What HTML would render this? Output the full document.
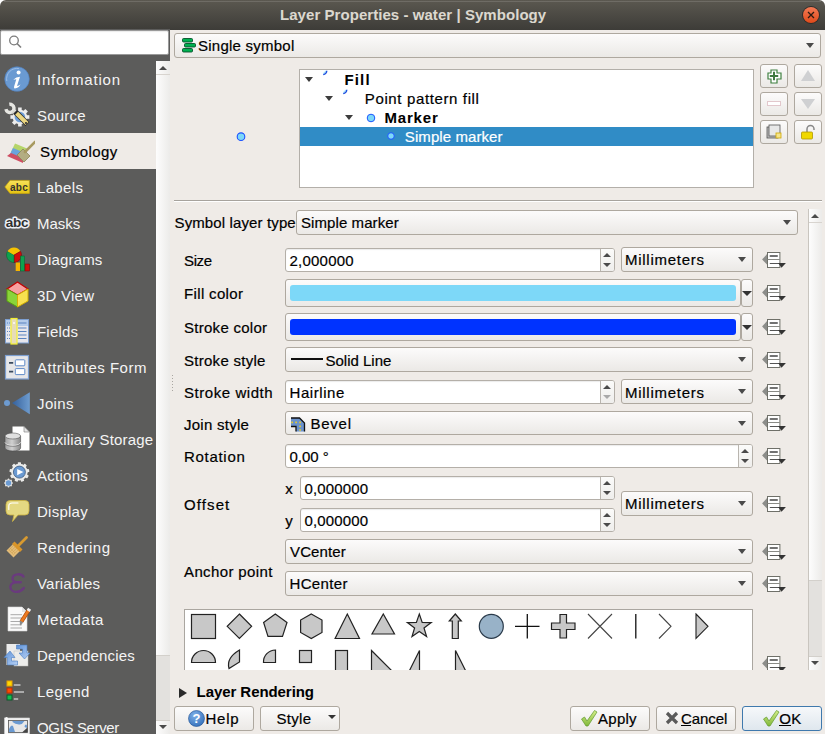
<!DOCTYPE html>
<html><head><meta charset="utf-8">
<style>
*{box-sizing:border-box}
html,body{margin:0;padding:0}
body{width:825px;height:734px;overflow:hidden;position:relative;background:#efebe7;font-family:"Liberation Sans",sans-serif;font-size:15px;color:#000}
.a{position:absolute}
.t{position:absolute;white-space:nowrap;line-height:18px;height:18px;-webkit-text-stroke:0.2px currentColor}
#title{left:0;top:0;width:825px;height:30px;border-radius:6px 6px 0 0;background:linear-gradient(#5b5850,#3d3c38);}
#corner{left:0;top:0;width:825px;height:8px;background:#fff}
.btn{position:absolute;border:1px solid #aea89f;border-radius:3px;background:linear-gradient(#fcfbfb,#ebe9e6)}
.inp{position:absolute;border:1px solid #b4afa8;border-radius:3px;background:#fff;box-shadow:inset 0 1px 1px rgba(0,0,0,.08)}
.arr{position:absolute;width:0;height:0;border-left:5px solid transparent;border-right:5px solid transparent;border-top:5px solid #4a4a4a}
.up{position:absolute;width:0;height:0;border-left:5px solid transparent;border-right:5px solid transparent;border-bottom:5px solid #4a4a4a}
.sb{position:absolute;border-left:1px solid #c9c5bf}
.side{color:#f4f4f4;-webkit-text-stroke:0}
</style></head><body>
<div id="corner" class="a"></div>
<div id="title" class="a"></div>
<div class="a" style="left:4px;top:1px;width:817px;height:1px;background:rgba(255,255,255,0.13)"></div>
<div class="t" style="left:280px;top:5.5px;font-weight:bold;color:#dcd8cf;letter-spacing:0.054px;-webkit-text-stroke:0.05px currentColor">Layer Properties - water | Symbology</div>
<!-- close -->
<svg class="a" style="left:801px;top:5px" width="20" height="20" viewBox="0 0 20 20">
<defs><linearGradient id="cg" x1="0" y1="0" x2="0" y2="1"><stop offset="0" stop-color="#f37a55"/><stop offset="1" stop-color="#df4a1a"/></linearGradient></defs>
<circle cx="10" cy="10" r="9" fill="#2e2d2a"/><circle cx="10" cy="10" r="8" fill="url(#cg)"/>
<path d="M7 7 L13 13 M13 7 L7 13" stroke="#2a1a12" stroke-width="1.3"/>
</svg>

<!-- sidebar -->
<div class="a" style="left:0;top:29px;width:170px;height:705px;background:#5c5c5b"></div>
<div class="inp" style="left:0;top:30px;width:169px;height:25px;border-radius:2px;border-color:#9a9a9a"></div>
<svg class="a" style="left:8px;top:34px" width="16" height="16" viewBox="0 0 16 16"><circle cx="6" cy="6.5" r="4.3" fill="none" stroke="#7b7b7b" stroke-width="1.3"/><path d="M9 9.5 L13 13.5" stroke="#7b7b7b" stroke-width="1.6"/></svg>

<div class="t side" style="left:37px;top:71px;letter-spacing:0.8px">Information</div>
<svg class="a" style="left:1px;top:63px" width="32" height="32" viewBox="0 0 32 32"><circle cx="16" cy="16" r="12.3" fill="#6a9ad2" stroke="#4f7fbf" stroke-width="0.6"/>
<path d="M5.8 18 A10.5 10.5 0 0 1 18 5.6" fill="none" stroke="#a6c4ea" stroke-width="1" opacity="0.8"/>
<circle cx="17.6" cy="9.6" r="2" fill="#fff"/>
<path d="M12.3 16.8 Q15 14 19 13.8 L16 23 Q18 22.8 19.5 21.5 Q18 25 13.8 25.4 Q12.6 25.3 13.1 23.4 L15.3 16.2 Q14 16.2 12.3 16.8 Z" fill="#fff"/></svg>
<div class="t side" style="left:37px;top:107px;letter-spacing:0.2px">Source</div>
<svg class="a" style="left:1px;top:99px" width="32" height="32" viewBox="0 0 32 32"><g fill="#ececec"><rect x="17.10" y="8.50" width="3.6" height="4" transform="rotate(0 18.9 18)"/><rect x="17.10" y="8.50" width="3.6" height="4" transform="rotate(45 18.9 18)"/><rect x="17.10" y="8.50" width="3.6" height="4" transform="rotate(90 18.9 18)"/><rect x="17.10" y="8.50" width="3.6" height="4" transform="rotate(135 18.9 18)"/><rect x="17.10" y="8.50" width="3.6" height="4" transform="rotate(180 18.9 18)"/><rect x="17.10" y="8.50" width="3.6" height="4" transform="rotate(225 18.9 18)"/><rect x="17.10" y="8.50" width="3.6" height="4" transform="rotate(270 18.9 18)"/><rect x="17.10" y="8.50" width="3.6" height="4" transform="rotate(315 18.9 18)"/><circle cx="18.9" cy="18" r="7.3"/></g><circle cx="18.9" cy="18" r="5.3" fill="#6f9fd8"/>
<path d="M8.3 5.3 A4.1 4.1 0 1 1 4.9 10.2" fill="none" stroke="#e6e6e2" stroke-width="3.4"/>
<path d="M11.8 12.3 L15 15.2" stroke="#d6d6d2" stroke-width="3.6"/>
<path d="M14.2 12.8 L26.4 25" stroke="#2a2a2a" stroke-width="5.6"/>
<path d="M15.6 14.2 L26 24.6" stroke="#ebd680" stroke-width="4.2"/>
<circle cx="25" cy="24" r="1.1" fill="#333"/></svg>
<div class="a" style="left:0;top:133px;width:156px;height:36px;background:#efebe7"></div>
<div class="t" style="left:40px;top:143px;color:#000;letter-spacing:0.38px">Symbology</div>
<svg class="a" style="left:3px;top:135px" width="32" height="32" viewBox="0 0 32 32"><path d="M12 8.5 L24 13.5 L20 22 L8 17 Z" fill="#b6d56a"/>
<path d="M10 13 L22 18 L18 26 L6 21 Z" fill="#6aa4dc"/>
<path d="M8 18 L20 23 L20 28 L4 21 Z" fill="#cf4f63"/>
<path d="M14 20 L20 14 L27 21 L21 27 Z" fill="#b3ad82" stroke="#8b845b" stroke-width="0.8"/>
<path d="M22 17 L32 7" stroke="#a89a60" stroke-width="2.6" stroke-linecap="round"/></svg>
<div class="t side" style="left:37px;top:179px;letter-spacing:0.34px">Labels</div>
<svg class="a" style="left:1px;top:171px" width="32" height="32" viewBox="0 0 32 32"><defs><linearGradient id="lg" x1="0" y1="0" x2="0" y2="1"><stop offset="0" stop-color="#f8e25a"/><stop offset="1" stop-color="#e6c412"/></linearGradient></defs><path d="M3.9 15.9 L9 9.4 L28.4 9.4 L28.4 22.4 L9 22.4 Z" fill="url(#lg)" stroke="#caa70a" stroke-width="0.7"/>
<text x="18" y="19.6" font-family="Liberation Sans" font-weight="bold" font-size="10" text-anchor="middle" fill="#333" letter-spacing="0.2">abc</text></svg>
<div class="t side" style="left:37px;top:215px;letter-spacing:0.0px">Masks</div>
<svg class="a" style="left:1px;top:207px" width="32" height="32" viewBox="0 0 32 32"><text x="16" y="20" font-family="Liberation Sans" font-weight="bold" font-size="13.5" text-anchor="middle" fill="#303030" stroke="#eef0f6" stroke-width="3" stroke-linejoin="round" paint-order="stroke" letter-spacing="-0.3">abc</text></svg>
<div class="t side" style="left:37px;top:251px;letter-spacing:0.17px">Diagrams</div>
<svg class="a" style="left:1px;top:243px" width="32" height="32" viewBox="0 0 32 32"><path d="M13 12 L13 4.5 A7.5 7.5 0 0 1 19.5 8.3 Z" fill="#f6c200"/>
<path d="M13 12 L19.5 8.3 A7.5 7.5 0 0 1 13 19.5 Z" fill="#d10d0d" stroke="#7a0000" stroke-width="0.5"/>
<path d="M13 12 L13 19.5 A7.5 7.5 0 0 1 6.5 8.3 Z" fill="#0fa050" stroke="#05602e" stroke-width="0.5"/>
<path d="M13 12 L6.5 8.3 A7.5 7.5 0 0 1 13 4.5 Z" fill="#f6c200"/>
<rect x="14.7" y="19.5" width="4.3" height="8.5" fill="#f6b400"/>
<rect x="19.6" y="13" width="3.9" height="15" fill="#0fa050" stroke="#05602e" stroke-width="0.5"/>
<rect x="24" y="21" width="4.5" height="7" fill="#d10d0d" stroke="#7a0000" stroke-width="0.5"/></svg>
<div class="t side" style="left:37px;top:287px;letter-spacing:0.23px">3D View</div>
<svg class="a" style="left:1px;top:279px" width="32" height="32" viewBox="0 0 32 32"><path d="M16.5 3 L27 10 L16.5 16 L6 10 Z" fill="#f7a0a0" stroke="#c00000" stroke-width="1.2"/>
<path d="M6 10 L16.5 16 L16.5 28 L6 22 Z" fill="#8ad43a" stroke="#58a010" stroke-width="1"/>
<path d="M27 10 L16.5 16 L16.5 28 L27 22 Z" fill="#f8e050" stroke="#d4b000" stroke-width="1"/></svg>
<div class="t side" style="left:37px;top:323px;letter-spacing:0.2px">Fields</div>
<svg class="a" style="left:1px;top:315px" width="32" height="32" viewBox="0 0 32 32"><rect x="4.5" y="4.5" width="23" height="23.5" fill="#e6e6ec" stroke="#7d9fd0" stroke-width="1"/>
<rect x="5" y="5" width="22" height="6" fill="#b4cbea"/>
<path d="M17 8 H25.5 M17 13 H25.5 M17 16.5 H25.5 M17 20 H25.5 M17 23.5 H25.5" stroke="#5a84c0" stroke-width="1.1"/>
<path d="M6 8 H9 M6 13 H9 M6 16.5 H9 M6 20 H9 M6 23.5 H9" stroke="#5a84c0" stroke-width="1.1" stroke-dasharray="1 1"/>
<rect x="10" y="3.5" width="6" height="25.5" fill="#e6dcb8" stroke="#f4f030" stroke-width="1.2"/>
<circle cx="13" cy="8" r="0.9" fill="#fff"/></svg>
<div class="t side" style="left:37px;top:359px;letter-spacing:0.49px">Attributes Form</div>
<svg class="a" style="left:1px;top:351px" width="32" height="32" viewBox="0 0 32 32"><rect x="4.5" y="4.5" width="23" height="23.5" fill="#e6e6e8" stroke="#7d9fd0" stroke-width="1.2"/>
<rect x="14.3" y="8.8" width="9.5" height="6" rx="0.8" fill="#fff" stroke="#5f8ac8" stroke-width="1"/>
<rect x="14.3" y="17.6" width="9.5" height="6" rx="0.8" fill="#fff" stroke="#5f8ac8" stroke-width="1"/>
<path d="M8 11.8 H12.2 M8 20.6 H12.2" stroke="#3a4a5e" stroke-width="1.8"/></svg>
<div class="t side" style="left:37px;top:395px;letter-spacing:0.38px">Joins</div>
<svg class="a" style="left:1px;top:387px" width="32" height="32" viewBox="0 0 32 32"><defs><linearGradient id="jg" x1="0" x2="1"><stop offset="0" stop-color="#34609c"/><stop offset="1" stop-color="#6e9ccf"/></linearGradient></defs>
<circle cx="6" cy="16" r="3" fill="#6d9bd0"/>
<path d="M11 16 L28.8 5.2 L28.8 27.2 Z" fill="url(#jg)"/></svg>
<div class="t side" style="left:37px;top:431px;letter-spacing:0.17px">Auxiliary Storage</div>
<svg class="a" style="left:1px;top:423px" width="32" height="32" viewBox="0 0 32 32"><defs><linearGradient id="dbg" x1="0" x2="1"><stop offset="0" stop-color="#a0a0a0"/><stop offset="0.45" stop-color="#d0d0d0"/><stop offset="1" stop-color="#888"/></linearGradient></defs>
<path d="M11.5 3.5 H23 L28.5 9 V27.5 H11.5 Z" fill="#fff"/>
<path d="M23 3.5 V9 H28.5 Z" fill="#e6e6e6" stroke="#777" stroke-width="0.6"/>
<path d="M4 13 V25 A7.8 3 0 0 0 19.6 25 V13 Z" fill="url(#dbg)" stroke="#4a4a4a" stroke-width="0.6"/>
<ellipse cx="11.8" cy="13" rx="7.8" ry="3" fill="#e0e0e0" stroke="#555" stroke-width="0.6"/>
<path d="M4 19.4 A7.8 3 0 0 0 19.6 19.4" fill="none" stroke="#eaeaea" stroke-width="0.9"/>
<path d="M4 20.3 A7.8 3 0 0 0 19.6 20.3" fill="none" stroke="#5a5a5a" stroke-width="0.6"/></svg>
<div class="t side" style="left:37px;top:467px;letter-spacing:0.28px">Actions</div>
<svg class="a" style="left:1px;top:459px" width="32" height="32" viewBox="0 0 32 32"><g fill="#ececea"><rect x="16.80" y="3.20" width="3.2" height="3.10" rx="0.6" transform="rotate(0.0 18.4 13.1)"/><rect x="16.80" y="3.20" width="3.2" height="3.10" rx="0.6" transform="rotate(40.0 18.4 13.1)"/><rect x="16.80" y="3.20" width="3.2" height="3.10" rx="0.6" transform="rotate(80.0 18.4 13.1)"/><rect x="16.80" y="3.20" width="3.2" height="3.10" rx="0.6" transform="rotate(120.0 18.4 13.1)"/><rect x="16.80" y="3.20" width="3.2" height="3.10" rx="0.6" transform="rotate(160.0 18.4 13.1)"/><rect x="16.80" y="3.20" width="3.2" height="3.10" rx="0.6" transform="rotate(200.0 18.4 13.1)"/><rect x="16.80" y="3.20" width="3.2" height="3.10" rx="0.6" transform="rotate(240.0 18.4 13.1)"/><rect x="16.80" y="3.20" width="3.2" height="3.10" rx="0.6" transform="rotate(280.0 18.4 13.1)"/><rect x="16.80" y="3.20" width="3.2" height="3.10" rx="0.6" transform="rotate(320.0 18.4 13.1)"/><circle cx="18.4" cy="13.1" r="8.3"/></g><circle cx="18.4" cy="13.1" r="6" fill="#6a9ad2" stroke="#2d4a70" stroke-width="0.7"/><path d="M16.2 10 L22.3 13.1 L16.2 16.2 Z" fill="#fff"/><g fill="#e4e4e2"><rect x="6.70" y="19.60" width="1.6" height="2.30" rx="0.6" transform="rotate(0.0 7.5 24)"/><rect x="6.70" y="19.60" width="1.6" height="2.30" rx="0.6" transform="rotate(45.0 7.5 24)"/><rect x="6.70" y="19.60" width="1.6" height="2.30" rx="0.6" transform="rotate(90.0 7.5 24)"/><rect x="6.70" y="19.60" width="1.6" height="2.30" rx="0.6" transform="rotate(135.0 7.5 24)"/><rect x="6.70" y="19.60" width="1.6" height="2.30" rx="0.6" transform="rotate(180.0 7.5 24)"/><rect x="6.70" y="19.60" width="1.6" height="2.30" rx="0.6" transform="rotate(225.0 7.5 24)"/><rect x="6.70" y="19.60" width="1.6" height="2.30" rx="0.6" transform="rotate(270.0 7.5 24)"/><rect x="6.70" y="19.60" width="1.6" height="2.30" rx="0.6" transform="rotate(315.0 7.5 24)"/><circle cx="7.5" cy="24" r="3.6"/></g><circle cx="7.5" cy="24" r="2.7" fill="#6a9ad2"/></svg>
<div class="t side" style="left:37px;top:503px;letter-spacing:0.25px">Display</div>
<svg class="a" style="left:1px;top:495px" width="32" height="32" viewBox="0 0 32 32"><path d="M9 5.5 H24 Q28 5.5 28 9.5 V16 Q28 20 24 20 H17 L11.5 26.5 L13 20 H9 Q5 20 5 16 V9.5 Q5 5.5 9 5.5 Z" fill="#e4d882" stroke="#cdb440" stroke-width="0.8"/>
<path d="M7.8 14.5 V11 Q7.8 8 11.2 8 H17" stroke="#fff" stroke-width="1.1" fill="none" stroke-linecap="round"/></svg>
<div class="t side" style="left:37px;top:539px;letter-spacing:0.47px">Rendering</div>
<svg class="a" style="left:1px;top:531px" width="32" height="32" viewBox="0 0 32 32"><path d="M16.5 15.5 L25.5 6.5" stroke="#d89a30" stroke-width="2.8" stroke-linecap="round"/>
<path d="M5.5 19.5 L12.5 12.5 L19.5 19.5 L12.5 26.5 Z" fill="#e2bb78"/>
<path d="M8 19 L13 14 M9.5 20.5 L14.5 15.5 M11 22 L16 17 M12.5 23.5 L17.5 18.5 M9 17 L14 22 M7.5 18.5 L12.5 23.5" stroke="#c8963c" stroke-width="0.5" opacity="0.7"/>
<path d="M11 13 L13.5 10.5 L21.5 18.5 L19 21 Z" fill="#d9952a"/></svg>
<div class="t side" style="left:37px;top:575px;letter-spacing:0.2px">Variables</div>
<svg class="a" style="left:1px;top:567px" width="32" height="32" viewBox="0 0 32 32"><path d="M22.5 9.5 C20.5 6.5 12.5 6.3 11.6 10.8 C11.2 13.5 13 15.2 15.8 15.2 L19.8 15.2 M15.8 15.2 C11 15.2 9 17.6 9.4 20.6 C9.9 24 13.5 25 16 24.8 C19 24.6 21.2 23.2 22.8 21" fill="none" stroke="#6a3a7e" stroke-width="2.4" stroke-linecap="round"/></svg>
<div class="t side" style="left:37px;top:611px;letter-spacing:0.56px">Metadata</div>
<svg class="a" style="left:1px;top:603px" width="32" height="32" viewBox="0 0 32 32"><path d="M7 4 H21 L26 9 V28 H7 Z" fill="#fafafa" stroke="#d6d6d6" stroke-width="0.6"/>
<path d="M21 4 V9 H26" fill="#e4e4e4"/>
<path d="M9.5 11.7 H21 M9.5 15 H21 M9.5 18.5 H21 M9.5 21.8 H21 M9.5 25 H21" stroke="#a0a0a0" stroke-width="0.9"/>
<path d="M27.5 7.5 L20.5 18.5" stroke="#b04a08" stroke-width="4"/>
<path d="M27.5 7.5 L20.5 18.5" stroke="#ec7a20" stroke-width="2.6"/>
<path d="M28.6 5.8 L27.2 8" stroke="#f0f0f0" stroke-width="3.6"/>
<path d="M18.7 17.6 L22.3 19.6 L19 22.8 Z" fill="#8a8a8a"/></svg>
<div class="t side" style="left:37px;top:647px;letter-spacing:0.16px">Dependencies</div>
<svg class="a" style="left:1px;top:639px" width="32" height="32" viewBox="0 0 32 32"><defs><linearGradient id="dpg" x1="0" y1="0" x2="1" y2="1"><stop offset="0" stop-color="#5e92d8"/><stop offset="1" stop-color="#b6d0f4"/></linearGradient></defs>
<rect x="5.5" y="5" width="13.5" height="21" fill="#ececec"/>
<rect x="13" y="12" width="14" height="15" fill="#ececea" stroke="#bdbdb8" stroke-width="0.5"/>
<path d="M9 12 L3 18.5 L6.5 18.5 L6.5 26 L16.5 26 L16.5 22 L10.5 22 L10.5 18.5 L14 18.5 Z" fill="url(#dpg)" stroke="#4a7cc0" stroke-width="0.6"/>
<path d="M15.5 6 L26 6 L26 14 L29 14 L23.5 20 L18 14 L21.5 14 L21.5 10 L15.5 10 Z" fill="url(#dpg)" stroke="#4a7cc0" stroke-width="0.6"/></svg>
<div class="t side" style="left:37px;top:683px;letter-spacing:0.46px">Legend</div>
<svg class="a" style="left:1px;top:675px" width="32" height="32" viewBox="0 0 32 32"><rect x="6" y="6" width="5" height="5" fill="#ffd800" stroke="#e8a000" stroke-width="1"/>
<rect x="6" y="13" width="5" height="5" fill="#ff4a00" stroke="#c03000" stroke-width="1"/>
<rect x="6" y="20" width="5" height="5" fill="#10c050" stroke="#0a5a2a" stroke-width="1"/>
<path d="M12.8 10 H19.5 M12.8 17 H23 M12.8 24 H17.2" stroke="#aaa" stroke-width="2"/></svg>
<div class="t side" style="left:37px;top:719px;letter-spacing:-0.35px">QGIS Server</div>
<svg class="a" style="left:1px;top:711px" width="32" height="32" viewBox="0 0 32 32"><rect x="3.5" y="7" width="25" height="18" fill="#efefef" stroke="#d8d8d8" stroke-width="0.6"/>
<rect x="4" y="6" width="3" height="19" rx="1.5" fill="#fafafa"/>
<rect x="7.5" y="9.5" width="19" height="12" fill="#e8e8e8" stroke="#555" stroke-width="0.8"/>
<path d="M11.5 10 H23.5 Q21 14 18 13.5 Q14 13 11.5 11 Z" fill="#6a9ad2"/>
<path d="M8 21 V18 Q10 13 12 15 Q13 18 14 21 Z" fill="#6a9ad2"/>
<path d="M24 14 Q26 12.5 26 15.5 V17 L23.5 16 Z" fill="#6a9ad2"/>
<path d="M21 21.5 L26.5 16.5 L26.5 21.5 Z" fill="#444"/></svg>


<!-- sidebar scrollbar -->
<div class="a" style="left:156px;top:61px;width:14px;height:673px;background:#e3e1de"></div>
<div class="a" style="left:156px;top:61px;width:14px;height:594px;background:linear-gradient(90deg,#fdfdfd,#ecebe9)"></div>
<div class="a" style="left:156px;top:74px;width:14px;height:1px;background:#d8d4cf"></div>
<div class="up" style="left:159px;top:65.8px;border-width:0 4px 4.2px 4px"></div>
<div class="a" style="left:156px;top:655px;width:14px;height:1px;background:#d3d0cb"></div>
<div class="a" style="left:156px;top:720px;width:14px;height:14px;background:linear-gradient(90deg,#fdfdfd,#ecebe9);border-top:1px solid #d3d0cb"></div>
<div class="arr" style="left:159px;top:725px;border-width:4.2px 4px 0 4px"></div>

<div class="btn" style="left:174px;top:33px;width:647px;height:25px"></div>
<div class="arr" style="left:805.5px;top:43.0px;border-width:5px 4.5px 0 4.5px"></div>
<svg class="a" style="left:182px;top:38px" width="14" height="15" viewBox="0 0 14 15"><rect x="0.5" y="0.5" width="10" height="3.5" rx="1" fill="#00b050" stroke="#06502a" stroke-width="0.9"/><rect x="2.5" y="5.5" width="11" height="3.5" rx="1" fill="#00b050" stroke="#06502a" stroke-width="0.9"/><rect x="0.5" y="10.5" width="10" height="3.5" rx="1" fill="#00b050" stroke="#06502a" stroke-width="0.9"/></svg>
<div class="t" style="left:198px;top:37px;letter-spacing:0.243px">Single symbol</div>
<svg class="a" style="left:235px;top:131px" width="12" height="12"><circle cx="6" cy="5.7" r="3.8" fill="#7dd8f8" stroke="#1a50ff" stroke-width="1.1"/></svg>
<div class="a" style="left:299px;top:69px;width:455px;height:119px;background:#fff;border:1px solid #b3afa9"></div>
<div class="a" style="left:300px;top:127px;width:453px;height:19px;background:#308cc6"></div>
<div class="arr" style="left:305px;top:77px;border-width:5px 4.5px 0 4.5px;border-top-color:#3c3c3c"></div>
<div class="arr" style="left:325px;top:96px;border-width:5px 4.5px 0 4.5px;border-top-color:#3c3c3c"></div>
<div class="arr" style="left:345px;top:115px;border-width:5px 4.5px 0 4.5px;border-top-color:#3c3c3c"></div>
<svg class="a" style="left:322px;top:70px" width="7" height="7"><path d="M4.8 0.8 A4.2 4.2 0 0 1 1.2 4.6" fill="none" stroke="#2050e0" stroke-width="1.4"/><path d="M3.6 0.8 A3 3 0 0 1 1.2 3.4" fill="none" stroke="#7dd8f8" stroke-width="0.8"/></svg>
<svg class="a" style="left:342px;top:89px" width="7" height="7"><path d="M4.8 0.8 A4.2 4.2 0 0 1 1.2 4.6" fill="none" stroke="#2050e0" stroke-width="1.4"/><path d="M3.6 0.8 A3 3 0 0 1 1.2 3.4" fill="none" stroke="#7dd8f8" stroke-width="0.8"/></svg>
<svg class="a" style="left:365px;top:112px" width="12" height="12"><circle cx="6" cy="6" r="3.8" fill="#7dd8f8" stroke="#1a55ff" stroke-width="1"/></svg>
<svg class="a" style="left:385px;top:130px" width="12" height="12"><circle cx="6" cy="6" r="3.3" fill="#7dd8f8" stroke="#1a55ff" stroke-width="1"/></svg>
<div class="t" style="left:344.5px;top:71px;font-weight:bold;letter-spacing:1.140px;-webkit-text-stroke:0.05px currentColor">Fill</div>
<div class="t" style="left:364.8px;top:90px;letter-spacing:0.630px">Point pattern fill</div>
<div class="t" style="left:384.5px;top:109px;font-weight:bold;letter-spacing:0.816px;-webkit-text-stroke:0.05px currentColor">Marker</div>
<div class="t" style="left:404.8px;top:128px;color:#fff;letter-spacing:0.085px">Simple marker</div>
<div class="btn" style="left:760px;top:64px;width:28px;height:24px"></div>
<div class="btn" style="left:794px;top:64px;width:28px;height:24px"></div>
<div class="btn" style="left:760px;top:92px;width:28px;height:24px"></div>
<div class="btn" style="left:794px;top:92px;width:28px;height:24px"></div>
<div class="btn" style="left:760px;top:120px;width:28px;height:24px"></div>
<div class="btn" style="left:794px;top:120px;width:28px;height:24px"></div>
<svg class="a" style="left:766px;top:68px" width="16" height="16" viewBox="0 0 16 16"><path d="M4.5 1.5 H10.5 V4.5 H14.5 V10.5 H10.5 V14.5 H4.5 V10.5 H1.5 V4.5 H4.5 Z" transform="translate(0.5,0.5)" fill="#fff" stroke="#3f8040" stroke-width="1.2"/><path d="M8 3.8 V12.2 M3.8 8 H12.2" stroke="#3f7a40" stroke-width="2"/></svg>
<svg class="a" style="left:799px;top:69px" width="18" height="14" viewBox="0 0 18 14"><path d="M9 1 L16 12 L2 12 Z" fill="#cfd0d2"/></svg>
<svg class="a" style="left:766px;top:97px" width="16" height="14" viewBox="0 0 16 14"><rect x="1.5" y="4.5" width="13" height="4" fill="#fff" stroke="#e2c8cc" stroke-width="1"/></svg>
<svg class="a" style="left:799px;top:97px" width="18" height="14" viewBox="0 0 18 14"><path d="M2 2 L16 2 L9 12 Z" fill="#cfd0d2"/></svg>
<svg class="a" style="left:766px;top:124px" width="16" height="16" viewBox="0 0 16 16"><rect x="1" y="3" width="11" height="11" fill="#bdbdbd" stroke="#555" stroke-width="0.8"/><rect x="3" y="1" width="11" height="11" fill="#e8e8e8" stroke="#555" stroke-width="0.8"/><rect x="10" y="9" width="5" height="5" fill="#f5e58a" stroke="#d0a800" stroke-width="0.8"/></svg>
<svg class="a" style="left:800px;top:124px" width="16" height="16" viewBox="0 0 16 16"><path d="M7 8 V5 A3.5 3.5 0 0 1 14 5 V6" fill="none" stroke="#888" stroke-width="1.5"/><rect x="1.5" y="8" width="11" height="7" rx="1" fill="#f0d800" stroke="#b09800" stroke-width="0.8"/></svg>
<div class="a" style="left:174px;top:200px;width:648px;height:1px;background:#a7a39d"></div>
<div class="a" style="left:174px;top:201px;width:648px;height:1px;background:#fff"></div>
<div class="a" style="left:808px;top:209px;width:14px;height:461px;background:#e3e1de;border-left:1px solid #c9c5bf"></div>
<div class="a" style="left:809px;top:209px;width:13px;height:371px;background:linear-gradient(90deg,#fdfdfd,#ecebe9)"></div>
<div class="a" style="left:809px;top:222px;width:13px;height:1px;background:#d8d4cf"></div>
<div class="up" style="left:811px;top:213.9px;border-width:0 4px 4.2px 4px"></div>
<div class="a" style="left:809px;top:580px;width:13px;height:1px;background:#d3d0cb"></div>
<div class="a" style="left:809px;top:656px;width:13px;height:14px;background:linear-gradient(90deg,#fdfdfd,#ecebe9);border-top:1px solid #d3d0cb"></div>
<div class="arr" style="left:811px;top:661px;border-width:4.2px 4px 0 4px"></div>
<div class="t" style="left:174.5px;top:214px;letter-spacing:0.124px">Symbol layer type</div>
<div class="btn" style="left:296px;top:210px;width:502px;height:25px"></div>
<div class="t" style="left:301px;top:214px;;letter-spacing:0.085px">Simple marker</div>
<div class="arr" style="left:782.5px;top:220.0px;border-width:5px 4.5px 0 4.5px"></div>
<div class="t" style="left:184px;top:252px;;letter-spacing:-0.360px">Size</div>
<div class="inp" style="left:285px;top:248px;width:330px;height:24px"></div>
<div class="t" style="left:289.5px;top:252px;letter-spacing:0.223px">2,000000</div>
<div class="a" style="left:600px;top:249px;width:14px;height:22px;border-left:1px solid #b9b5af;background:linear-gradient(#fbfbfa,#efeeec);border-radius:0 2px 2px 0"></div>
<div class="up" style="left:602.5px;top:253.0px;border-width:0 4px 4.5px 4px"></div>
<div class="arr" style="left:602.5px;top:262.5px;border-width:4.5px 4px 0 4px;border-top-color:#4a4a4a"></div>
<div class="btn" style="left:621px;top:247px;width:132px;height:25px"></div>
<div class="t" style="left:625px;top:251px;letter-spacing:0.736px">Millimeters</div>
<div class="arr" style="left:737.5px;top:257.0px;border-width:5px 4.5px 0 4.5px"></div>
<svg class="a" style="left:761px;top:251px" width="26" height="18" viewBox="0 0 26 18"><path d="M1.1 8.4 L6.5 2.6 L6.5 14 Z" fill="#8c8d8a"/><rect x="6.5" y="1.5" width="12.4" height="15" fill="#fff" stroke="#6f7069" stroke-width="1"/><path d="M6.5 8.5 H18.9" stroke="#8a8b86" stroke-width="1"/><path d="M9.3 5 H16.2" stroke="#444" stroke-width="1.6" stroke-linecap="round"/><path d="M8.8 12.5 H18" stroke="#555" stroke-width="1"/><path d="M17.2 12.1 L24.9 12.1 L20.5 16.8 Z" fill="#333"/></svg>
<div class="t" style="left:184px;top:285px;letter-spacing:0.350px">Fill color</div>
<div class="btn" style="left:285px;top:279px;width:456px;height:28px"></div>
<div class="a" style="left:290px;top:285px;width:446px;height:16px;border-radius:3px;background:#7dd8f8"></div>
<div class="btn" style="left:741px;top:279px;width:12px;height:28px"></div>
<div class="arr" style="left:742px;top:291px;border-width:5px 5px 0 5px;border-top-color:#333"></div>
<svg class="a" style="left:761px;top:284px" width="26" height="18" viewBox="0 0 26 18"><path d="M1.1 8.4 L6.5 2.6 L6.5 14 Z" fill="#8c8d8a"/><rect x="6.5" y="1.5" width="12.4" height="15" fill="#fff" stroke="#6f7069" stroke-width="1"/><path d="M6.5 8.5 H18.9" stroke="#8a8b86" stroke-width="1"/><path d="M9.3 5 H16.2" stroke="#444" stroke-width="1.6" stroke-linecap="round"/><path d="M8.8 12.5 H18" stroke="#555" stroke-width="1"/><path d="M17.2 12.1 L24.9 12.1 L20.5 16.8 Z" fill="#333"/></svg>
<div class="t" style="left:184px;top:318.5px;letter-spacing:0.278px">Stroke color</div>
<div class="btn" style="left:285px;top:313px;width:456px;height:28px"></div>
<div class="a" style="left:290px;top:319px;width:446px;height:16px;border-radius:3px;background:#0033ff"></div>
<div class="btn" style="left:741px;top:313px;width:12px;height:28px"></div>
<div class="arr" style="left:742px;top:325px;border-width:5px 5px 0 5px;border-top-color:#333"></div>
<svg class="a" style="left:761px;top:318px" width="26" height="18" viewBox="0 0 26 18"><path d="M1.1 8.4 L6.5 2.6 L6.5 14 Z" fill="#8c8d8a"/><rect x="6.5" y="1.5" width="12.4" height="15" fill="#fff" stroke="#6f7069" stroke-width="1"/><path d="M6.5 8.5 H18.9" stroke="#8a8b86" stroke-width="1"/><path d="M9.3 5 H16.2" stroke="#444" stroke-width="1.6" stroke-linecap="round"/><path d="M8.8 12.5 H18" stroke="#555" stroke-width="1"/><path d="M17.2 12.1 L24.9 12.1 L20.5 16.8 Z" fill="#333"/></svg>
<div class="t" style="left:184px;top:352px;letter-spacing:0.278px">Stroke style</div>
<div class="btn" style="left:285px;top:347px;width:468px;height:25px"></div>
<div class="arr" style="left:737.5px;top:357.0px;border-width:5px 4.5px 0 4.5px"></div>
<div class="a" style="left:291px;top:358px;width:32px;height:2px;background:#111"></div>
<div class="t" style="left:325.5px;top:352px;letter-spacing:0.000px">Solid Line</div>
<svg class="a" style="left:761px;top:351px" width="26" height="18" viewBox="0 0 26 18"><path d="M1.1 8.4 L6.5 2.6 L6.5 14 Z" fill="#8c8d8a"/><rect x="6.5" y="1.5" width="12.4" height="15" fill="#fff" stroke="#6f7069" stroke-width="1"/><path d="M6.5 8.5 H18.9" stroke="#8a8b86" stroke-width="1"/><path d="M9.3 5 H16.2" stroke="#444" stroke-width="1.6" stroke-linecap="round"/><path d="M8.8 12.5 H18" stroke="#555" stroke-width="1"/><path d="M17.2 12.1 L24.9 12.1 L20.5 16.8 Z" fill="#333"/></svg>
<div class="t" style="left:184px;top:384px;letter-spacing:0.558px">Stroke width</div>
<div class="inp" style="left:285px;top:380px;width:330px;height:24px"></div>
<div class="t" style="left:289.5px;top:384px;letter-spacing:0.570px">Hairline</div>
<div class="a" style="left:600px;top:381px;width:14px;height:22px;border-left:1px solid #b9b5af;background:linear-gradient(#fbfbfa,#efeeec);border-radius:0 2px 2px 0"></div>
<div class="up" style="left:602.5px;top:385.0px;border-width:0 4px 4.5px 4px"></div>
<div class="arr" style="left:602.5px;top:394.5px;border-width:4.5px 4px 0 4px;border-top-color:#a9a9a9"></div>
<div class="btn" style="left:621px;top:379px;width:132px;height:25px"></div>
<div class="t" style="left:625px;top:383.5px;letter-spacing:0.736px">Millimeters</div>
<div class="arr" style="left:737.5px;top:389.0px;border-width:5px 4.5px 0 4.5px"></div>
<svg class="a" style="left:761px;top:383px" width="26" height="18" viewBox="0 0 26 18"><path d="M1.1 8.4 L6.5 2.6 L6.5 14 Z" fill="#8c8d8a"/><rect x="6.5" y="1.5" width="12.4" height="15" fill="#fff" stroke="#6f7069" stroke-width="1"/><path d="M6.5 8.5 H18.9" stroke="#8a8b86" stroke-width="1"/><path d="M9.3 5 H16.2" stroke="#444" stroke-width="1.6" stroke-linecap="round"/><path d="M8.8 12.5 H18" stroke="#555" stroke-width="1"/><path d="M17.2 12.1 L24.9 12.1 L20.5 16.8 Z" fill="#333"/></svg>
<div class="t" style="left:184px;top:416px;letter-spacing:0.260px">Join style</div>
<div class="btn" style="left:285px;top:411px;width:468px;height:24px"></div>
<div class="arr" style="left:737.5px;top:420.5px;border-width:5px 4.5px 0 4.5px"></div>
<svg class="a" style="left:290px;top:417px" width="16" height="15" viewBox="0 0 16 15"><path d="M1 1 H9.5 L14.5 6 V14.5 H6 V9.5 H1 Z" fill="#6a92cc"/><path d="M1 1 H9.5 L14.5 6 V14.5 M1 9.5 H6 V14.5" fill="none" stroke="#111" stroke-width="1.3"/><g fill="#f0d020"><rect x="1.3" y="4.6" width="1.6" height="1.6"/><rect x="5.3" y="4.6" width="1.6" height="1.6"/><rect x="9.3" y="4.6" width="1.6" height="1.6"/><rect x="9.3" y="8.6" width="1.6" height="1.6"/><rect x="9.3" y="12.2" width="1.6" height="1.6"/></g></svg>
<div class="t" style="left:310.5px;top:415px;letter-spacing:0.750px">Bevel</div>
<svg class="a" style="left:761px;top:414px" width="26" height="18" viewBox="0 0 26 18"><path d="M1.1 8.4 L6.5 2.6 L6.5 14 Z" fill="#8c8d8a"/><rect x="6.5" y="1.5" width="12.4" height="15" fill="#fff" stroke="#6f7069" stroke-width="1"/><path d="M6.5 8.5 H18.9" stroke="#8a8b86" stroke-width="1"/><path d="M9.3 5 H16.2" stroke="#444" stroke-width="1.6" stroke-linecap="round"/><path d="M8.8 12.5 H18" stroke="#555" stroke-width="1"/><path d="M17.2 12.1 L24.9 12.1 L20.5 16.8 Z" fill="#333"/></svg>
<div class="t" style="left:184px;top:448px;letter-spacing:0.700px">Rotation</div>
<div class="inp" style="left:285px;top:444px;width:468px;height:24px"></div>
<div class="t" style="left:289.5px;top:448px;letter-spacing:-0.030px">0,00 °</div>
<div class="a" style="left:738px;top:445px;width:14px;height:22px;border-left:1px solid #b9b5af;background:linear-gradient(#fbfbfa,#efeeec);border-radius:0 2px 2px 0"></div>
<div class="up" style="left:740.5px;top:449.0px;border-width:0 4px 4.5px 4px"></div>
<div class="arr" style="left:740.5px;top:458.5px;border-width:4.5px 4px 0 4px;border-top-color:#4a4a4a"></div>
<svg class="a" style="left:761px;top:447px" width="26" height="18" viewBox="0 0 26 18"><path d="M1.1 8.4 L6.5 2.6 L6.5 14 Z" fill="#8c8d8a"/><rect x="6.5" y="1.5" width="12.4" height="15" fill="#fff" stroke="#6f7069" stroke-width="1"/><path d="M6.5 8.5 H18.9" stroke="#8a8b86" stroke-width="1"/><path d="M9.3 5 H16.2" stroke="#444" stroke-width="1.6" stroke-linecap="round"/><path d="M8.8 12.5 H18" stroke="#555" stroke-width="1"/><path d="M17.2 12.1 L24.9 12.1 L20.5 16.8 Z" fill="#333"/></svg>
<div class="t" style="left:184px;top:496px;letter-spacing:1.100px">Offset</div>
<div class="t" style="left:285.3px;top:480px;">x</div>
<div class="inp" style="left:300px;top:476px;width:315px;height:24px"></div>
<div class="t" style="left:304.5px;top:480px;letter-spacing:0.151px">0,000000</div>
<div class="a" style="left:600px;top:477px;width:14px;height:22px;border-left:1px solid #b9b5af;background:linear-gradient(#fbfbfa,#efeeec);border-radius:0 2px 2px 0"></div>
<div class="up" style="left:602.5px;top:481.0px;border-width:0 4px 4.5px 4px"></div>
<div class="arr" style="left:602.5px;top:490.5px;border-width:4.5px 4px 0 4px;border-top-color:#4a4a4a"></div>
<div class="t" style="left:285.3px;top:512px;">y</div>
<div class="inp" style="left:300px;top:508px;width:315px;height:24px"></div>
<div class="t" style="left:304.5px;top:512px;letter-spacing:0.151px">0,000000</div>
<div class="a" style="left:600px;top:509px;width:14px;height:22px;border-left:1px solid #b9b5af;background:linear-gradient(#fbfbfa,#efeeec);border-radius:0 2px 2px 0"></div>
<div class="up" style="left:602.5px;top:513.0px;border-width:0 4px 4.5px 4px"></div>
<div class="arr" style="left:602.5px;top:522.5px;border-width:4.5px 4px 0 4px;border-top-color:#4a4a4a"></div>
<div class="btn" style="left:621px;top:491px;width:132px;height:25px"></div>
<div class="t" style="left:625px;top:495px;letter-spacing:0.736px">Millimeters</div>
<div class="arr" style="left:737.5px;top:501.0px;border-width:5px 4.5px 0 4.5px"></div>
<svg class="a" style="left:761px;top:495px" width="26" height="18" viewBox="0 0 26 18"><path d="M1.1 8.4 L6.5 2.6 L6.5 14 Z" fill="#8c8d8a"/><rect x="6.5" y="1.5" width="12.4" height="15" fill="#fff" stroke="#6f7069" stroke-width="1"/><path d="M6.5 8.5 H18.9" stroke="#8a8b86" stroke-width="1"/><path d="M9.3 5 H16.2" stroke="#444" stroke-width="1.6" stroke-linecap="round"/><path d="M8.8 12.5 H18" stroke="#555" stroke-width="1"/><path d="M17.2 12.1 L24.9 12.1 L20.5 16.8 Z" fill="#333"/></svg>
<div class="t" style="left:184px;top:563px;letter-spacing:0.376px">Anchor point</div>
<div class="btn" style="left:285px;top:539px;width:468px;height:25px"></div>
<div class="t" style="left:290px;top:543px;letter-spacing:0.130px">VCenter</div>
<div class="arr" style="left:737.5px;top:549.0px;border-width:5px 4.5px 0 4.5px"></div>
<svg class="a" style="left:761px;top:543px" width="26" height="18" viewBox="0 0 26 18"><path d="M1.1 8.4 L6.5 2.6 L6.5 14 Z" fill="#8c8d8a"/><rect x="6.5" y="1.5" width="12.4" height="15" fill="#fff" stroke="#6f7069" stroke-width="1"/><path d="M6.5 8.5 H18.9" stroke="#8a8b86" stroke-width="1"/><path d="M9.3 5 H16.2" stroke="#444" stroke-width="1.6" stroke-linecap="round"/><path d="M8.8 12.5 H18" stroke="#555" stroke-width="1"/><path d="M17.2 12.1 L24.9 12.1 L20.5 16.8 Z" fill="#333"/></svg>
<div class="btn" style="left:285px;top:571px;width:468px;height:25px"></div>
<div class="t" style="left:289.5px;top:575px;letter-spacing:0.350px">HCenter</div>
<div class="arr" style="left:737.5px;top:581.0px;border-width:5px 4.5px 0 4.5px"></div>
<svg class="a" style="left:761px;top:575px" width="26" height="18" viewBox="0 0 26 18"><path d="M1.1 8.4 L6.5 2.6 L6.5 14 Z" fill="#8c8d8a"/><rect x="6.5" y="1.5" width="12.4" height="15" fill="#fff" stroke="#6f7069" stroke-width="1"/><path d="M6.5 8.5 H18.9" stroke="#8a8b86" stroke-width="1"/><path d="M9.3 5 H16.2" stroke="#444" stroke-width="1.6" stroke-linecap="round"/><path d="M8.8 12.5 H18" stroke="#555" stroke-width="1"/><path d="M17.2 12.1 L24.9 12.1 L20.5 16.8 Z" fill="#333"/></svg>
<div class="a" style="left:184px;top:609px;width:569px;height:61px;background:#fff;border:1px solid #aaa6a0;border-bottom:none;overflow:hidden"><svg width="569" height="61" viewBox="184 609 569 61" style="position:absolute;left:-1px;top:-1px"><g fill="#c8c8c8" stroke="#222" stroke-width="1.2"><rect x="191.5" y="614.5" width="24" height="24"/><path d="M239.4 614 L251.6 626.3 L239.4 638.5 L227.2 626.3 Z"/><path d="M275.3 614 L287 622.5 L282.5 636.4 L268 636.4 L263.6 622.5 Z" /><path d="M311.3 614 L322 620 L322 632.5 L311.3 638.5 L300.6 632.5 L300.6 620 Z"/><path d="M347.3 614 L359.5 638.5 L335.1 638.5 Z"/><path d="M383.3 616 L394.5 636 L372 636 Z" transform="translate(0,-2)"/><path d="M419.3 614 L422.2 622.5 L431.2 622.6 L424 628 L426.6 636.6 L419.3 631.5 L412 636.6 L414.6 628 L407.4 622.6 L416.4 622.5 Z"/><path d="M455.3 614 L461.3 621 L458.3 621 L458.3 638.5 L452.3 638.5 L452.3 621 L449.3 621 Z"/></g><circle cx="491.3" cy="626.3" r="12" fill="#98b2c8" stroke="#2a3a4a" stroke-width="1.2"/><path d="M515 626.3 H539.5 M527.3 614 V638.5" stroke="#111" stroke-width="1.3"/><path d="M560 614.5 H566.5 V623 H575 V629.5 H566.5 V638 H560 V629.5 H551.5 V623 H560 Z" fill="#c8c8c8" stroke="#222" stroke-width="1.2"/><path d="M588 614 L612 638.5 M612 614 L588 638.5" stroke="#444" stroke-width="1.1"/><path d="M635.8 614 V638.5" stroke="#111" stroke-width="1.3"/><path d="M659 614 L671 626.3 L659 638.5" fill="none" stroke="#444" stroke-width="1.1"/><path d="M696 614 L708 626.3 L696 638.5 Z" fill="#c8c8c8" stroke="#222" stroke-width="1.1"/><g fill="#c8c8c8" stroke="#222" stroke-width="1.2"><path d="M191.5 662.5 A12 12 0 0 1 215.5 662.5 Z"/><path d="M239.5 650 V662 L229 668.5 Q226 658 239.5 650 Z"/><path d="M275.5 650 V662.5 H263.5 A12 12 0 0 1 275.5 650 Z"/><rect x="299.5" y="650.5" width="12" height="12"/><rect x="335.5" y="650.5" width="12" height="24"/><path d="M371.5 650.5 L395.5 674.5 L371.5 674.5 Z"/><path d="M419.5 650.5 L419.5 674.5 L407.5 674.5 Z"/><path d="M455.5 650.5 L467.5 674.5 L455.5 674.5 Z"/></g></svg></div>
<svg class="a" style="left:761px;top:655px" width="26" height="18" viewBox="0 0 26 18"><path d="M1.1 8.4 L6.5 2.6 L6.5 14 Z" fill="#8c8d8a"/><rect x="6.5" y="1.5" width="12.4" height="15" fill="#fff" stroke="#6f7069" stroke-width="1"/><path d="M6.5 8.5 H18.9" stroke="#8a8b86" stroke-width="1"/><path d="M9.3 5 H16.2" stroke="#444" stroke-width="1.6" stroke-linecap="round"/><path d="M8.8 12.5 H18" stroke="#555" stroke-width="1"/><path d="M17.2 12.1 L24.9 12.1 L20.5 16.8 Z" fill="#333"/></svg>
<div class="a" style="left:174px;top:670px;width:634px;height:14px;background:#efebe7"></div>
<div class="a" style="left:178.5px;top:687.5px;width:0;height:0;border-top:5px solid transparent;border-bottom:5px solid transparent;border-left:8px solid #2a2a2a"></div>
<div class="t" style="left:196.6px;top:683px;font-weight:bold;letter-spacing:-0.070px;-webkit-text-stroke:0.05px currentColor">Layer Rendering</div>
<div class="btn" style="left:174px;top:706px;width:80px;height:25px"></div>
<svg class="a" style="left:188px;top:710px" width="17" height="17" viewBox="0 0 17 17"><defs><radialGradient id="hg" cx="0.4" cy="0.3" r="0.8"><stop offset="0" stop-color="#7fb0e8"/><stop offset="1" stop-color="#2f6cb8"/></radialGradient></defs><circle cx="8.5" cy="8.5" r="8" fill="url(#hg)" stroke="#1f4f90" stroke-width="0.6"/><text x="8.5" y="13.3" font-family="Liberation Sans" font-weight="bold" font-size="13" text-anchor="middle" fill="#fff">?</text></svg>
<div class="t" style="left:205.5px;top:709.5px;letter-spacing:0.750px">Help</div>
<div class="btn" style="left:260px;top:706px;width:80px;height:25px"></div>
<div class="t" style="left:276.5px;top:709.5px;letter-spacing:0.298px">Style</div>
<div class="arr" style="left:328px;top:715px;border-width:4px 4px 0 4px;border-top-color:#333"></div>
<div class="btn" style="left:570px;top:706px;width:80px;height:25px"></div>
<svg class="a" style="left:580px;top:709px" width="18" height="18" viewBox="0 0 18 18"><defs><linearGradient id="ck" x1="0" y1="0" x2="0" y2="1"><stop offset="0" stop-color="#d6ee8a"/><stop offset="1" stop-color="#80b83a"/></linearGradient></defs><path d="M1.5 10 L4.5 8 L7 12 L14.5 1.5 L17 3 L8 17 L6 17 Z" fill="url(#ck)" stroke="#5f9a2c" stroke-width="0.7"/></svg>
<div class="t" style="left:598px;top:709.5px;letter-spacing:0.275px">Apply</div>
<div class="btn" style="left:656px;top:706px;width:80px;height:25px"></div>
<svg class="a" style="left:665px;top:711px" width="14" height="14" viewBox="0 0 14 14"><path d="M2 2 L12 12 M12 2 L2 12" stroke="#5a5a5a" stroke-width="3.2"/></svg>
<div class="t" style="left:681px;top:709.5px;letter-spacing:-0.072px">Cancel</div>
<div class="a" style="left:681px;top:725px;width:10px;height:1px;background:#000"></div>
<div class="btn" style="left:742px;top:706px;width:80px;height:25px;border-color:#3f79ad;background:linear-gradient(#f6f8fa,#dfe7ee)"></div>
<svg class="a" style="left:762px;top:709px" width="18" height="18" viewBox="0 0 18 18"><path d="M1.5 10 L4.5 8 L7 12 L14.5 1.5 L17 3 L8 17 L6 17 Z" fill="url(#ck)" stroke="#5f9a2c" stroke-width="0.7"/></svg>
<div class="t" style="left:779.2px;top:709.5px;letter-spacing:0.360px">OK</div>
<div class="a" style="left:779px;top:725px;width:12px;height:1px;background:#000"></div>
<svg class="a" style="left:171px;top:374px" width="3" height="18"><g fill="#a9a6a1"><rect x="1" y="1" width="1" height="1"/><rect x="1" y="4" width="1" height="1"/><rect x="1" y="7" width="1" height="1"/><rect x="1" y="10" width="1" height="1"/><rect x="1" y="13" width="1" height="1"/><rect x="1" y="16" width="1" height="1"/></g></svg>
</body></html>
